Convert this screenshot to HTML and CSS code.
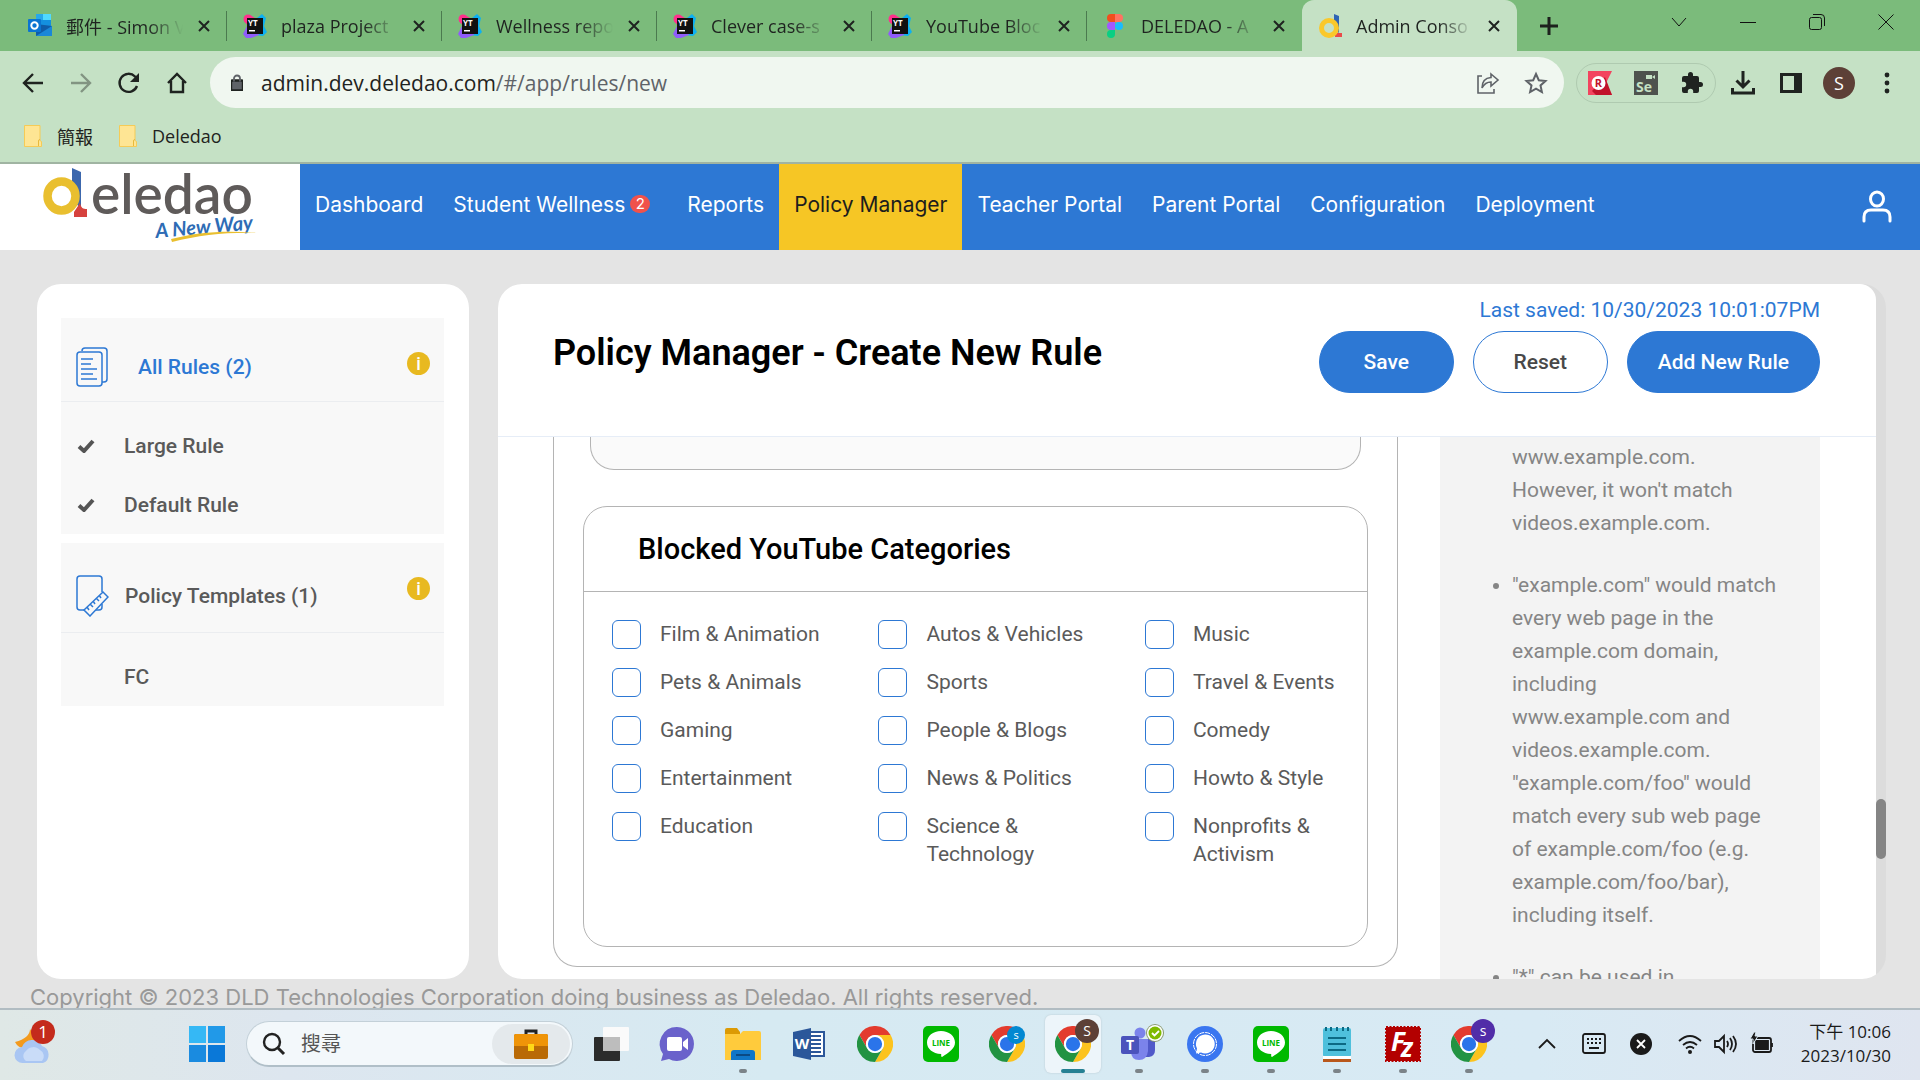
FILE: index.html
```
<!DOCTYPE html>
<html lang="en">
<head>
    <meta charset="UTF-8">
    <meta name="viewport" content="width=device-width, initial-scale=1.0">
    <title>Admin Console</title>
    <link rel="stylesheet" href="styles.css">
</head>
<body>
    <!-- shared icons -->
    <svg class="defs" width="0" height="0" aria-hidden="true">
        <symbol id="chrome" viewBox="0 0 48 48">
            <path fill="#e33b2e" d="M24 12H44.8A24 24 0 0 0 3.2 12L13.6 30A12 12 0 0 1 24 12z"/>
            <path fill="#fcc31e" d="M44.8 12A24 24 0 0 1 24 48L34.4 30A12 12 0 0 0 24 12z"/>
            <path fill="#229342" d="M3.2 12A24 24 0 0 0 24 48L34.4 30A12 12 0 0 1 13.6 30z"/>
            <circle cx="24" cy="24" r="12" fill="#fff"/>
            <circle cx="24" cy="24" r="9.5" fill="#2a74ea"/>
        </symbol>
        <symbol id="line" viewBox="0 0 36 36">
            <rect width="36" height="36" rx="5" fill="#00b900"/>
            <path fill="#fff" d="M18 5c8 0 14 5 14 11.500 0 6-6 10-13 14.500-1-.2-.8-1.500-.8-3C9.500 27.500 4 23 4 16.500 4 10 10 5 18 5z"/>
            <text x="18" y="20" font-size="8" font-weight="700" text-anchor="middle" fill="#00b900">LINE</text>
        </symbol>
        <symbol id="yt" viewBox="0 0 24 24">
            <circle cx="5" cy="5" r="4.500" fill="#ff318c"/>
            <path fill="#ff318c" d="M1 7l5 6 6-9-5-3z"/>
            <path fill="#0cb0f2" d="M14 4l5-4 4 4-2 8 3 6-4 4-8-1z"/>
            <path fill="#905cfb" d="M4 12l-4 8 3 4h5l8-3-3-8z"/>
            <rect x="4" y="4" width="16" height="16" fill="#111"/>
            <text x="5" y="12" font-size="8" font-weight="700" fill="#fff">YT</text>
            <path fill="#fff" d="M6 16h6v1.500H6z"/>
        </symbol>
        <symbol id="close" viewBox="0 0 14 14">
            <path d="M2 2l10 10M12 2L2 12" fill="none" stroke="currentColor" stroke-width="2"/>
        </symbol>
        <symbol id="deledao" viewBox="0 0 24 24">
            <path fill="#2f64b5" d="M16 0l5 2v17l-5-5z"/>
            <path fill="#ea4a4a" d="M17 17c1 2 3 2 7 2v4h-7z"/>
            <circle cx="11" cy="14" r="7.500" fill="none" stroke="#fac82b" stroke-width="5"/>
        </symbol>
        <symbol id="check" viewBox="0 0 18 14">
            <path d="M2 7.500l5 4.500L16 2" fill="none" stroke="#555" stroke-width="4"/>
        </symbol>
        <symbol id="folder" viewBox="0 0 18 22">
            <path fill="#fee594" stroke="#f5cb57" d="M.5.5h15.500v15l1.500 1v5H.5z"/>
            <path fill="none" stroke="#e8b93c" d="M14.500 21v-5q0-1.500 1.500-1.500"/>
        </symbol>
    </svg>

    <div class="browser">
        <div class="tabs">
            <div class="tab">
                <svg class="favicon" viewBox="0 0 24 24"><path fill="#1490df" d="M8 0h15v12H8z"/><path fill="#28a8ea" d="M8 0h7v6H8z"/><path fill="#50d9ff" d="M15 0h8v6h-8z"/><path fill="#0f5ca8" d="M8 10l16 2v10H8z"/><path fill="#1a87d8" d="M8 22l16-10v10z"/><rect y="5" width="13" height="13" rx="1" fill="#0a74d1"/><circle cx="6.500" cy="11.500" r="3.200" fill="none" stroke="#fff" stroke-width="2"/></svg>
                <span class="tab-title">郵件 - Simon V</span>
                <button class="tab-close" aria-label="Close tab"><svg><use href="#close"/></svg></button>
            </div>
            <div class="tab">
                <svg class="favicon"><use href="#yt"/></svg>
                <span class="tab-title">plaza Project</span>
                <button class="tab-close" aria-label="Close tab"><svg><use href="#close"/></svg></button>
            </div>
            <div class="tab">
                <svg class="favicon"><use href="#yt"/></svg>
                <span class="tab-title">Wellness repo</span>
                <button class="tab-close" aria-label="Close tab"><svg><use href="#close"/></svg></button>
            </div>
            <div class="tab">
                <svg class="favicon"><use href="#yt"/></svg>
                <span class="tab-title">Clever case-s</span>
                <button class="tab-close" aria-label="Close tab"><svg><use href="#close"/></svg></button>
            </div>
            <div class="tab">
                <svg class="favicon"><use href="#yt"/></svg>
                <span class="tab-title">YouTube Bloc</span>
                <button class="tab-close" aria-label="Close tab"><svg><use href="#close"/></svg></button>
            </div>
            <div class="tab">
                <svg class="favicon" viewBox="0 0 24 24"><path fill="#f24e1e" d="M12 0H8a4 4 0 0 0 0 8h4z"/><path fill="#ff7262" d="M12 0h4a4 4 0 0 1 0 8h-4z"/><path fill="#a259ff" d="M12 8H8a4 4 0 0 0 0 8h4z"/><circle cx="16" cy="12" r="4" fill="#1abcfe"/><path fill="#0acf83" d="M12 16H8a4 4 0 1 0 4 4z"/></svg>
                <span class="tab-title">DELEDAO - A</span>
                <button class="tab-close" aria-label="Close tab"><svg><use href="#close"/></svg></button>
            </div>
            <div class="tab active">
                <svg class="favicon"><use href="#deledao"/></svg>
                <span class="tab-title">Admin Conso</span>
                <button class="tab-close" aria-label="Close tab"><svg><use href="#close"/></svg></button>
            </div>
            <button class="new-tab" aria-label="New tab"><svg viewBox="0 0 18 18"><path d="M9 0v18M0 9h18" stroke="#1d211d" stroke-width="3"/></svg></button>
            <div class="window-buttons">
                <button aria-label="Search tabs"><svg viewBox="0 0 16 16"><path d="M1 4l7 8 7-8"/></svg></button>
                <button aria-label="Minimize"><svg viewBox="0 0 16 16"><path d="M0 8.500h16"/></svg></button>
                <button aria-label="Restore"><svg viewBox="0 0 16 16"><rect x=".5" y="3.500" width="12" height="12" rx="2"/><path d="M4 .5h8q3.500 0 3.500 3.500v8"/></svg></button>
                <button aria-label="Close"><svg viewBox="0 0 16 16"><path d="M.5.5l15 15M15.500.5l-15 15"/></svg></button>
            </div>
        </div>

        <div class="toolbar">
            <div class="nav-buttons">
                <button aria-label="Back"><svg viewBox="0 0 24 24"><path d="M22 12H3M12 3l-9 9 9 9"/></svg></button>
                <button class="dim" aria-label="Forward"><svg viewBox="0 0 24 24"><path d="M2 12h19M12 3l9 9-9 9"/></svg></button>
                <button aria-label="Reload"><svg viewBox="0 0 24 24"><path d="M20 15a9 9 0 1 1-2-9.500l2 2"/><path fill="#1f2320" stroke="none" d="M22 2v9h-9z"/></svg></button>
                <button aria-label="Home"><svg viewBox="0 0 24 24"><path d="M3 12l9-9 9 9M6 10v11h12V10"/></svg></button>
            </div>
            <div class="omnibox">
                <svg class="lock" viewBox="0 0 12 16"><rect y="6" width="12" height="10" rx="1.500" fill="#5f6368"/><path d="M3 7V4a3 3 0 0 1 6 0v3" fill="none" stroke="#5f6368" stroke-width="1.800"/></svg>
                <div class="url"><span class="host">admin.dev.deledao.com</span>/#/app/rules/new</div>
                <button aria-label="Share"><svg viewBox="0 0 24 24"><path d="M6 5H2v17h16v-4"/><path d="M15 3l7 6-7 6v-4c-4 0-7 2-9 6 0-6 3-10 9-10.500z"/></svg></button>
                <button aria-label="Bookmark"><svg viewBox="0 0 24 24"><path stroke-width="2" d="M12 3l2.800 6.200 6.700.7-5 4.500 1.400 6.600L12 17.600 6.100 21l1.400-6.600-5-4.500 6.700-.7z"/></svg></button>
            </div>
            <div class="extensions">
                <button aria-label="Recorder"><svg viewBox="0 0 24 24"><path fill="#f3445f" d="M0 0h24l-6 12 6 12H0z"/><path fill="#c1122b" d="M4 20L17 6l7 18H8z"/><circle cx="10.500" cy="12" r="7" fill="#fff"/><text x="10.500" y="16" font-size="11" font-weight="700" text-anchor="middle" fill="#c1122b">R</text></svg></button>
                <button aria-label="Selenium"><svg viewBox="0 0 24 24"><rect width="24" height="24" fill="#4e524e"/><path fill="#c5e1c5" d="M12 4h6v4h-6zM18 6l3-2v4z"/><text x="2" y="21" font-size="14" font-weight="700" fill="#c5e1c5">Se</text></svg></button>
                <button aria-label="Extensions"><svg viewBox="0 0 24 24"><path fill="#1f2320" d="M20.500 11H19V7a2 2 0 0 0-2-2h-4V3.500a2.500 2.500 0 0 0-5 0V5H4a2 2 0 0 0-2 2v3.800h1.500a2.700 2.700 0 0 1 0 5.400H2V20a2 2 0 0 0 2 2h3.800v-1.500a2.700 2.700 0 0 1 5.400 0V22H17a2 2 0 0 0 2-2v-4h1.500a2.500 2.500 0 0 0 0-5z"/></svg></button>
            </div>
            <div class="tool-buttons">
                <button aria-label="Downloads"><svg viewBox="0 0 24 24"><path stroke-width="3" d="M12 0v15M5.500 9.500L12 16l6.500-6.500M1.500 17v5h21v-5"/></svg></button>
                <button aria-label="Side panel"><svg viewBox="0 0 24 24"><path fill="#1f2320" stroke="none" fill-rule="evenodd" d="M1 2h22v20H1zM4 5v14h11V5z"/></svg></button>
                <button class="avatar" aria-label="Profile">S</button>
                <button aria-label="Menu"><svg viewBox="0 0 24 24"><g fill="#1f2320" stroke="none"><circle cx="12" cy="4" r="2.400"/><circle cx="12" cy="12" r="2.400"/><circle cx="12" cy="20" r="2.400"/></g></svg></button>
            </div>
        </div>

        <div class="bookmarks">
            <a href="#"><svg><use href="#folder"/></svg>簡報</a>
            <a href="#"><svg><use href="#folder"/></svg>Deledao</a>
        </div>
    </div>

    <div class="page">
        <header class="site-header">
            <a class="logo" href="#" aria-label="Deledao">
                <svg viewBox="0 0 300 86">
                    <path fill="#3c67ad" d="M72 4l9 4v37l-9-10z"/>
                    <path fill="#d6423e" d="M74 48l6-9c1 5 3 6 7 6v8H74z"/>
                    <ellipse cx="61.500" cy="32" rx="14" ry="14.500" fill="none" stroke="#e9bf2f" stroke-width="8.500"/>
                    <text class="logo-name" x="91" y="50">eledao</text>
                    <text class="logo-tag" x="156" y="74" transform="rotate(-5 156 74)">A New Way</text>
                    <path fill="#e9bf2f" d="M171 75c26-7 56-9 87-6-30-1-58 2-86 9z"/>
                </svg>
            </a>
            <nav class="main-nav">
                <a href="#">Dashboard</a>
                <a href="#" class="wellness">Student Wellness<span class="badge">2</span></a>
                <a href="#">Reports</a>
                <a href="#" class="current">Policy Manager</a>
                <a href="#">Teacher Portal</a>
                <a href="#">Parent Portal</a>
                <a href="#">Configuration</a>
                <a href="#">Deployment</a>
            </nav>
            <button class="user" aria-label="Account"><svg viewBox="0 0 30 34"><ellipse cx="15" cy="9" rx="6.500" ry="7" /><path d="M2 31v-4q0-7 7-7h12q7 0 7 7v4"/></svg></button>
        </header>

        <div class="content">
            <aside class="sidebar">
                <section class="rules">
                    <div class="group-head">
                        <svg class="group-icon" viewBox="0 0 34 42"><g fill="none" stroke="#2d78d4" stroke-width="1.500"><rect x="2" y="6" width="25" height="34" rx="3"/><path d="M7 5q0-3 3-3h19q3 0 3 3v28q0 3-3 3h-2"/><path d="M6 13h12M6 18h10M6 23h16M6 28h12M6 33h16"/></g></svg>
                        <a href="#" class="group-title selected">All Rules (2)</a>
                        <button class="info" aria-label="About rules">i</button>
                    </div>
                    <ul>
                        <li><svg class="tick"><use href="#check"/></svg><a href="#">Large Rule</a></li>
                        <li><svg class="tick"><use href="#check"/></svg><a href="#">Default Rule</a></li>
                    </ul>
                </section>
                <section class="templates">
                    <div class="group-head">
                        <svg class="group-icon" viewBox="0 0 34 42"><g fill="none" stroke="#2d78d4" stroke-width="1.500"><path d="M27 17V4q0-3-3-3H5Q2 1 2 4v28q0 3 3 3h4M21 35h3q3 0 3-3v-3"/><path d="M9 35l19-18 5 5-18 19zM12 32l2 3M15 29l3 3M18 26l2 3M21 23l3 3M24 20l2 3"/></g></svg>
                        <a href="#" class="group-title">Policy Templates (1)</a>
                        <button class="info" aria-label="About templates">i</button>
                    </div>
                    <ul>
                        <li><span class="tick"></span><a href="#">FC</a></li>
                    </ul>
                </section>
            </aside>

            <main class="panel">
                <div class="panel-body">
                    <div class="panel-head">
                        <h1>Policy Manager - Create New Rule</h1>
                        <div class="actions">
                            <p>Last saved: 10/30/2023 10:01:07PM</p>
                            <div class="buttons">
                                <button class="btn primary">Save</button>
                                <button class="btn">Reset</button>
                                <button class="btn primary">Add New Rule</button>
                            </div>
                        </div>
                    </div>
                    <div class="panel-scroll">
                        <div class="settings">
                            <textarea class="list-box" aria-label="List" readonly></textarea>
                            <section class="categories">
                                <h2>Blocked YouTube Categories</h2>
                                <div class="category-grid">
                                    <label><input type="checkbox"><span>Film &amp; Animation</span></label>
                                    <label><input type="checkbox"><span>Autos &amp; Vehicles</span></label>
                                    <label><input type="checkbox"><span>Music</span></label>
                                    <label><input type="checkbox"><span>Pets &amp; Animals</span></label>
                                    <label><input type="checkbox"><span>Sports</span></label>
                                    <label><input type="checkbox"><span>Travel &amp; Events</span></label>
                                    <label><input type="checkbox"><span>Gaming</span></label>
                                    <label><input type="checkbox"><span>People &amp; Blogs</span></label>
                                    <label><input type="checkbox"><span>Comedy</span></label>
                                    <label><input type="checkbox"><span>Entertainment</span></label>
                                    <label><input type="checkbox"><span>News &amp; Politics</span></label>
                                    <label><input type="checkbox"><span>Howto &amp; Style</span></label>
                                    <label><input type="checkbox"><span>Education</span></label>
                                    <label><input type="checkbox"><span>Science &amp; Technology</span></label>
                                    <label><input type="checkbox"><span>Nonprofits &amp; Activism</span></label>
                                </div>
                            </section>
                        </div>
                        <div class="help">
                            <ul>
                                <li class="continued">www.example.com.<br>However, it won't match videos.example.com.</li>
                                <li>"example.com" would match every web page in the example.com domain, including<br>www.example.com and videos.example.com. "example.com/foo" would match every sub web page of example.com/foo (e.g. example.com/foo/bar), including itself.</li>
                                <li>"*" can be used in</li>
                            </ul>
                        </div>
                    </div>
                </div>
                <div class="scrollbar"><div class="thumb"></div></div>
            </main>
        </div>
        <footer>Copyright © 2023 DLD Technologies Corporation doing business as Deledao. All rights reserved.</footer>
    </div>

    <div class="taskbar">
        <div class="task-left">
            <button class="weather" aria-label="Weather"><svg viewBox="0 0 44 46"><path fill="#f39a1e" d="M16 10q0 9-15 13 4 8 14 6 10-6 1-19z"/><path fill="#a9c6f3" d="M9 44a8 8 0 0 1-1-16 11 11 0 0 1 20-1 9 9 0 0 1 1 17z"/><path fill="#c9dcf8" d="M12 42a6 6 0 0 1 0-10 9 9 0 0 1 14-1 7 7 0 0 1 2 11z"/><circle cx="29" cy="13" r="12" fill="#c42b1c"/><text x="29" y="19" font-size="17" text-anchor="middle" fill="#fff">1</text></svg></button>
        </div>
        <div class="task-apps">
            <button class="start" aria-label="Start"><svg viewBox="0 0 36 36"><path fill="#35b8f5" d="M0 0h17v17H0z"/><path fill="#2199e8" d="M19 0h17v17H19z"/><path fill="#1a8be0" d="M0 19h17v17H0z"/><path fill="#0a78d8" d="M19 19h17v17H19z"/></svg></button>
            <div class="search">
                <svg class="magnifier" viewBox="0 0 24 24"><circle cx="10" cy="10" r="8" fill="none" stroke="#222" stroke-width="2.400"/><path d="M16 16l6 6" stroke="#222" stroke-width="3"/></svg>
                <input type="text" placeholder="搜尋" aria-label="搜尋">
                <span class="highlight"><svg viewBox="0 0 34 30"><path d="M12 6V2h10v4" fill="none" stroke="#222" stroke-width="3"/><rect y="5" width="34" height="25" rx="2" fill="#b96a06"/><path fill="#ef9408" d="M0 7q0-2 2-2h30q2 0 2 2v10H0z"/><rect x="14" y="15" width="6" height="7" fill="#ffd817"/></svg></span>
            </div>
            <button aria-label="Task view"><svg viewBox="0 0 36 36"><rect x="1" y="11" width="26" height="24" rx="1" fill="#2b2b2b"/><rect x="10" y="1" width="26" height="24" rx="1" fill="#fafafa"/><path fill="#bdbdbd" d="M10 11h17v14H10z"/></svg></button>
            <button aria-label="Chat"><svg viewBox="0 0 36 36"><path fill="#6a62cb" d="M18 1a17 17 0 1 1-8 32l-8 2 2-7A17 17 0 0 1 18 1z"/><rect x="8" y="11" width="15" height="14" rx="2" fill="#fff"/><path fill="#fff" d="M24 16l5-4v12l-5-4z"/></svg></button>
            <button class="running" aria-label="File Explorer"><svg viewBox="0 0 36 36"><path fill="#dc9a04" d="M0 4q0-2 2-2h10l3 4v4H0z"/><path fill="#ffcb3c" d="M0 8h15l3-3h16q2 0 2 2v27H0z"/><path fill="#0f76c8" d="M6 34v-7q0-3 3-3h18q3 0 3 3v7z"/><path d="M11 29h14" stroke="#0b4a84" stroke-width="2"/></svg></button>
            <button aria-label="Word"><svg viewBox="0 0 36 36"><path fill="#fff" stroke="#2b579a" stroke-width="2" d="M16 6h17v24H16z"/><path d="M18 10h12M18 14h12M18 18h12M18 22h12M18 26h12" stroke="#2b579a" stroke-width="1.800"/><path fill="#2b579a" d="M2 6l18-4v32L2 30z"/><text x="11" y="23" font-size="15" font-weight="700" text-anchor="middle" fill="#fff">W</text></svg></button>
            <button aria-label="Chrome"><svg><use href="#chrome"/></svg></button>
            <button aria-label="LINE"><svg><use href="#line"/></svg></button>
            <button aria-label="Chrome"><svg><use href="#chrome"/></svg><span class="mini blue">s</span></button>
            <button class="running focused" aria-label="Chrome"><svg><use href="#chrome"/></svg><span class="mini brown">S</span></button>
            <button class="running" aria-label="Teams"><svg viewBox="0 0 36 36"><circle cx="19" cy="7" r="5.500" fill="#7b83eb"/><path fill="#5059c9" d="M22 13h12v11q0 6-6 7h-6z"/><path fill="#7b83eb" d="M10 13h17v12q-1 9-9 9t-8-9z"/><rect x="0" y="10" width="18" height="18" rx="2" fill="#4b53bc"/><text x="9" y="24" font-size="14" font-weight="700" text-anchor="middle" fill="#fff">T</text><circle cx="34" cy="7" r="9" fill="#8a9a70"/><circle cx="34" cy="7" r="8" fill="#fff"/><circle cx="34" cy="7" r="6.500" fill="#7fba00"/><path d="M31 7l2.500 2.500L38 5" fill="none" stroke="#fff" stroke-width="1.800"/></svg></button>
            <button class="running" aria-label="Signal"><svg viewBox="0 0 36 36"><circle cx="18" cy="18" r="18" fill="#3a76f0"/><path fill="#fff" d="M18 8.500a9.500 9.500 0 1 1-4 18l-5 1 1-5a9.500 9.500 0 0 1 8-14z"/><circle cx="18" cy="18" r="11.500" fill="none" stroke="#fff" stroke-width="1" stroke-dasharray="5 1"/></svg></button>
            <button class="running" aria-label="LINE"><svg><use href="#line"/></svg></button>
            <button class="running" aria-label="Notepad"><svg viewBox="0 0 36 36"><rect x="4" y="2" width="28" height="29" rx="2" fill="#4fc0dc"/><path fill="#fff" d="M4 30h28v3H4z"/><path fill="#b9581c" d="M4 33h28v3H4z"/><path d="M9 12h18M9 18h18M9 24h18" stroke="#0c6a84" stroke-width="2"/><path d="M7 1v4M12 1v4M18 1v4M24 1v4M29 1v4" stroke="#0c6a84" stroke-width="2"/></svg></button>
            <button class="running" aria-label="FileZilla"><svg viewBox="0 0 36 36"><rect x="1" y="1" width="34" height="34" fill="#b30000" stroke="#b30000" stroke-width="2" stroke-dasharray="2 1.500"/><text x="6" y="25" font-size="26" font-weight="700" font-style="italic" fill="#fff">F</text><text x="16" y="31" font-size="26" font-weight="700" font-style="italic" fill="#fff">z</text></svg></button>
            <button class="running" aria-label="Chrome"><svg><use href="#chrome"/></svg><span class="mini purple">s</span></button>
        </div>
        <div class="tray">
            <svg viewBox="0 0 24 24"><path d="M4 16l8-8 8 8"/></svg>
            <svg viewBox="0 0 24 24"><rect x="1" y="2" width="22" height="19" rx="2"/><path d="M5 7h2M9 7h2M13 7h2M17 7h2M5 11h2M9 11h2M13 11h2M17 11h2M7 16h10"/></svg>
            <svg viewBox="0 0 24 24"><circle cx="12" cy="12" r="11" fill="#1a1a1a" stroke="none"/><path d="M8 8l8 8M16 8l-8 8" stroke="#fff"/></svg>
            <div class="status">
                <svg viewBox="0 0 24 24"><path d="M1 9q11-10 22 0M5 13q7-6 14 0M8 16.500q4-3.500 8 0"/><circle cx="12" cy="20" r="2" fill="#1a1a1a" stroke="none"/></svg>
                <svg viewBox="0 0 24 24"><path d="M1 9h4l5-5v16l-5-5H1zM13 9q2 3 0 6M16 6q4 6 0 12M19 4q6 8 0 16"/></svg>
                <svg viewBox="0 0 24 24"><rect x="3" y="6" width="18" height="14" rx="2"/><path fill="#1a1a1a" d="M6 9h12v8H6zM22 11v4"/><path fill="#1a1a1a" stroke="#dbe9f2" stroke-width="1" d="M4 0L0 7h3v5l5-8H5l1-4z"/></svg>
            </div>
            <div class="clock"><time>下午 10:06</time><time>2023/10/30</time></div>
        </div>
    </div>
</body>
</html>
```

FILE: styles.css
```
* {
    box-sizing: border-box;
}

body {
    margin: 0;
    height: 100vh;
    display: flex;
    flex-direction: column;
    overflow: hidden;
    background-color: #e4e4e4;
    font-family: Roboto, "Noto Sans CJK TC", sans-serif;
    font-size: 21px;
    color: #5a5a5a;
}

a {
    color: inherit;
    text-decoration: none;
}

button {
    font: inherit;
    color: inherit;
    background: none;
    border: none;
    padding: 0;
}

svg {
    display: block;
    flex: none;
}

.defs {
    display: none;
}

/* browser window */
.browser {
    flex: none;
    background-color: #c5e1c5;
    border-bottom: 2px solid #a0b4a2;
    font-family: "Open Sans", "Noto Sans CJK TC", sans-serif;
    font-size: 18px;
    color: #1f2320;
}

.tabs {
    display: flex;
    height: 51px;
    padding-left: 12px;
    background-color: #7bbb7b;
}

.tab {
    display: flex;
    align-items: center;
    width: 215px;
    padding: 0 16px;
    background: linear-gradient(#4b7a4f, #4b7a4f) no-repeat right center / 1px 30px;
}

.tab:nth-child(6) {
    background: none;
}

.tab.active {
    background: #c5e1c5;
    border-radius: 12px 12px 0 0;
}

.favicon {
    width: 24px;
    height: 24px;
    margin-right: 14px;
}

.tab-title {
    flex: 1;
    overflow: hidden;
    white-space: nowrap;
    mask-image: linear-gradient(to right, #000 70%, transparent);
}

.tab-close {
    margin-left: 14px;
}

.tab-close svg {
    width: 14px;
    height: 14px;
}

.new-tab {
    margin-left: 23px;
}

.new-tab svg {
    width: 18px;
    height: 18px;
}

.window-buttons {
    display: flex;
    height: 44px;
    margin-left: auto;
}

.window-buttons button {
    display: grid;
    place-items: center;
    width: 69px;
}

.window-buttons svg {
    width: 16px;
    height: 16px;
    fill: none;
    stroke: #111;
}

.toolbar {
    display: flex;
    align-items: center;
    height: 61px;
    padding: 2px 9px 0 9px;
}

.toolbar button {
    display: grid;
    place-items: center;
    width: 48px;
}

.toolbar svg {
    width: 24px;
    height: 24px;
    fill: none;
    stroke: #1f2320;
    stroke-width: 2.4;
}

.toolbar text,
.extensions path,
.extensions svg {
    stroke: none;
}

.nav-buttons,
.tool-buttons {
    display: flex;
    align-items: center;
}

.nav-buttons .dim {
    opacity: 0.4;
}

.omnibox {
    flex: 1;
    display: flex;
    align-items: center;
    height: 51px;
    margin: 0 12px 0 9px;
    padding: 0 4px 0 21px;
    border-radius: 26px;
    background-color: #f0f7f0;
    font-size: 21px;
    color: #5f6368;
}

.omnibox button svg {
    width: 24px;
    height: 24px;
    stroke: #5f6368;
    stroke-width: 1.6;
}

.omnibox .lock {
    width: 12px;
    height: 17px;
    margin-right: 18px;
}

.url {
    flex: 1;
}

.host {
    color: #1f2320;
}

.extensions {
    display: flex;
    margin-right: 3px;
    padding: 7px 0;
    border: 1px solid #afcab0;
    border-radius: 21px;
}

.extensions button {
    width: 46px;
}

.toolbar .avatar {
    width: 32px;
    height: 32px;
    margin: 0 8px;
    border-radius: 50%;
    background-color: #5d4037;
    color: #fff;
}

.bookmarks {
    display: flex;
    gap: 26px;
    height: 50px;
    padding: 0 0 2px 24px;
}

.bookmarks a {
    display: flex;
    align-items: center;
    gap: 15px;
}

.bookmarks svg {
    width: 18px;
    height: 22px;
}

/* admin page */
.page {
    flex: 1;
    min-height: 0;
    display: flex;
    flex-direction: column;
}

.site-header {
    display: flex;
    flex: none;
    height: 86px;
    background-color: #2d78d4;
}

.logo {
    width: 300px;
    background-color: #fff;
}

.logo-name {
    font-family: Lato, sans-serif;
    font-size: 55px;
    font-weight: 600;
    fill: #5f5b5a;
}

.logo-tag {
    font-family: Lato, sans-serif;
    font-size: 20px;
    font-weight: 700;
    font-style: italic;
    fill: #2e6cb5;
}

.main-nav {
    display: flex;
    flex: 1;
    font-family: Inter, sans-serif;
    font-size: 21px;
    color: #fff;
}

.main-nav a {
    display: flex;
    align-items: center;
    padding: 0 15px 6px;
    white-space: nowrap;
}

.main-nav .current {
    background-color: #f6c625;
    color: #1d1d1d;
}

.main-nav .wellness {
    padding-right: 22px;
}

.badge {
    margin-left: 5px;
    width: 20px;
    line-height: 18px;
    border-radius: 9px;
    background-color: #f0524b;
    font-size: 15px;
    text-align: center;
}

.user {
    margin-right: 28px;
}

.user svg {
    width: 30px;
    height: 34px;
    fill: none;
    stroke: #fff;
    stroke-width: 3;
    stroke-linecap: round;
}

.content {
    flex: 1;
    min-height: 0;
    display: flex;
    gap: 29px;
    padding: 34px 34px 0 37px;
}

.sidebar {
    width: 432px;
    padding: 34px 25px 0 24px;
    border-radius: 24px;
    background-color: #fff;
    font-weight: 500;
}

.sidebar section {
    margin-bottom: 9px;
    background-color: #f8f8f8;
}

.group-head {
    display: flex;
    align-items: center;
    height: 84px;
    padding: 14px 14px 0 14px;
    border-bottom: 1px solid #ebedf0;
}

.templates .group-head {
    height: 90px;
    padding-top: 16px;
}

.group-icon {
    width: 34px;
    height: 42px;
}

.group-title {
    flex: 1;
    margin-left: 16px;
}

.group-title.selected {
    margin-left: 29px;
    color: #2d78d4;
}

.info {
    width: 23px;
    height: 23px;
    margin-bottom: 6px;
    border-radius: 50%;
    background-color: #e8b920;
    color: #fff;
    font-size: 18px;
    line-height: 23px;
}

.templates .info {
    margin-bottom: 14px;
}

.sidebar ul {
    list-style: none;
    margin: 0;
    padding: 14px 0 0 16px;
}

.sidebar li {
    display: flex;
    align-items: center;
    height: 59px;
}

.tick {
    width: 18px;
    height: 14px;
    margin-right: 29px;
}

.panel {
    flex: 1;
    display: flex;
    overflow: hidden;
    border-radius: 24px;
    background-color: #dcdcdc;
}

.panel-body {
    flex: 1;
    display: flex;
    flex-direction: column;
    border-radius: 0 16px 0 0;
    background-color: #fff;
}

.panel-head {
    display: flex;
    justify-content: space-between;
    flex: none;
    height: 153px;
    padding: 12px 56px 0 55px;
    border-bottom: 1px solid #e6edf7;
}

h1 {
    margin: 35px 0 0;
    font-size: 36px;
    line-height: 44px;
    font-weight: 600;
    color: #000;
}

.actions p {
    margin: 0;
    line-height: 28px;
    text-align: right;
    color: #2d78d4;
}

.buttons {
    display: flex;
    gap: 19px;
    margin-top: 7px;
}

.btn {
    height: 62px;
    min-width: 135px;
    padding: 0 30px;
    border: 1px solid #2d78d4;
    border-radius: 31px;
    background-color: #fff;
    color: #484848;
    font-weight: 500;
}

.btn.primary {
    background-color: #2d78d4;
    color: #fff;
}

.panel-scroll {
    flex: 1;
    min-height: 0;
    display: flex;
    align-items: flex-start;
    gap: 42px;
    padding: 0 56px 0 55px;
    overflow: hidden;
}

.settings {
    flex: 1;
    padding: 0 29px 19px;
    border: 1px solid #b4b4b4;
    border-top: none;
    border-radius: 0 0 24px 24px;
}

.list-box {
    display: block;
    width: calc(100% - 14px);
    height: 33px;
    margin: 0 7px 36px;
    border: 1px solid #b4b4b4;
    border-top: none;
    border-radius: 0 0 24px 24px;
    background-color: #fafafa;
    resize: none;
}

.categories {
    border: 1px solid #b4b4b4;
    border-radius: 24px;
}

h2 {
    margin: 0;
    padding-left: 54px;
    border-bottom: 1px solid #b4b4b4;
    font-size: 29px;
    line-height: 84px;
    font-weight: 500;
    color: #000;
}

.category-grid {
    display: grid;
    grid-template-columns: 6fr 6fr 5fr;
    row-gap: 19px;
    padding: 28px 0 78px 28px;
}

.category-grid label {
    display: flex;
    gap: 19px;
    line-height: 28px;
}

.category-grid label span {
    max-width: 165px;
}

.category-grid input {
    appearance: none;
    flex: none;
    width: 29px;
    height: 29px;
    margin: 0;
    border: 1px solid #2d78d4;
    border-radius: 6px;
    background-color: #fff;
}

.help {
    width: 380px;
    height: 100%;
    overflow: hidden;
    background-color: #f3f3f3;
    color: #858585;
    line-height: 33px;
}

.help ul {
    margin: 0;
    padding: 4px 40px 0 72px;
}

.help li {
    margin-bottom: 29px;
}

.help .continued {
    list-style: none;
}

.scrollbar {
    flex: none;
    width: 10px;
    padding-top: 515px;
}

.thumb {
    height: 60px;
    border-radius: 5px;
    background-color: #858585;
}

footer {
    flex: none;
    height: 29px;
    padding: 4px 30px 0;
    font-family: Inter, sans-serif;
    font-size: 22px;
    line-height: 28px;
    color: #999;
}

/* taskbar */
.taskbar {
    flex: none;
    display: flex;
    align-items: center;
    height: 72px;
    padding-bottom: 2px;
    border-top: 2px solid #b1bcc2;
    background: linear-gradient(to right, #dfe8e6, #dde6ef 15%, #d6eaf2 40%, #d8eaf4 80%, #dfe5f0);
    font-family: "Open Sans", "Noto Sans CJK TC", sans-serif;
    font-size: 17px;
    color: #1a1a1a;
}

.task-left {
    width: 174px;
    padding-left: 14px;
}

.weather svg {
    width: 44px;
    height: 46px;
}

.task-apps {
    flex: 1;
    display: flex;
    align-items: center;
}

.task-apps > button {
    position: relative;
    display: grid;
    place-items: center;
    width: 56px;
    height: 58px;
    margin: 0 5px;
    border-radius: 6px;
}

.task-apps > button svg {
    width: 36px;
    height: 36px;
    overflow: visible;
}

.task-apps .running::after {
    content: "";
    position: absolute;
    left: 24px;
    bottom: 0;
    width: 8px;
    height: 4px;
    border-radius: 2px;
    background-color: #7b8388;
}

.task-apps .focused {
    background-color: #edf5fa;
    box-shadow: 0 0 2px #b5c5cd;
}

.task-apps .focused::after {
    left: 16px;
    width: 24px;
    background-color: #268093;
}

.mini {
    position: absolute;
    top: 4px;
    right: 2px;
    width: 24px;
    height: 24px;
    border-radius: 50%;
    color: #fff;
    font-size: 14px;
    line-height: 23px;
}

.mini.blue {
    top: 11px;
    right: 10px;
    width: 18px;
    height: 18px;
    font-size: 11px;
    line-height: 17px;
    background-color: #0288d1;
}

.mini.brown {
    background-color: #5d4037;
}

.mini.purple {
    background-color: #512da8;
}

.search {
    display: flex;
    align-items: center;
    width: 327px;
    height: 46px;
    margin: 0 5px 0 6px;
    padding: 0 2px 0 15px;
    border: 1px solid #c3d0d8;
    border-bottom: 2px solid #b0bfc8;
    border-radius: 23px;
    background-color: #f3f8fb;
}

.magnifier {
    width: 24px;
    height: 24px;
}

.search input {
    flex: 1;
    min-width: 0;
    padding: 0 0 0 15px;
    border: none;
    background: none;
    font: inherit;
    font-size: 20px;
}

.search input::placeholder {
    color: #555;
}

.highlight {
    display: grid;
    place-items: center;
    width: 78px;
    height: 40px;
    border-radius: 20px;
    background-color: #e4e9ec;
}

.highlight svg {
    width: 34px;
    height: 30px;
}

.tray {
    display: flex;
    align-items: center;
    gap: 23px;
    padding-right: 29px;
}

.tray svg {
    width: 24px;
    height: 24px;
    fill: none;
    stroke: #1a1a1a;
    stroke-width: 1.8;
}

.status {
    display: flex;
    gap: 12px;
    margin: 0 4px 0 2px;
}

.clock {
    display: flex;
    flex-direction: column;
    text-align: right;
    line-height: 24px;
}
```
